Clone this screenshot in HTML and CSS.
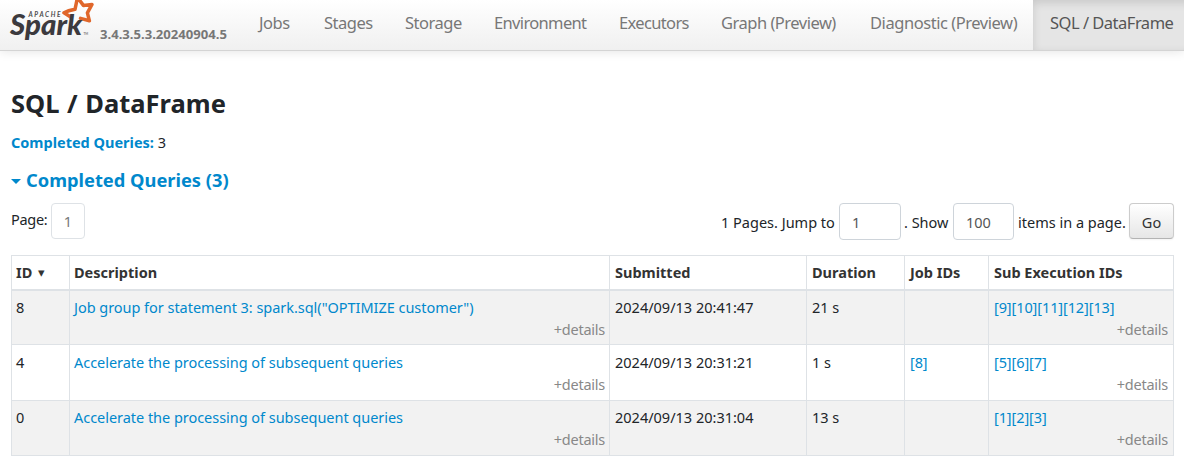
FILE: index.html
```html
<!DOCTYPE html>
<html lang="en">
<head>
<meta charset="utf-8">
<title>SQL / DataFrame</title>
<link rel="stylesheet" href="styles.css">
</head>
<body>
<nav class="navbar">
  <a class="brand">
    <svg class="logo" width="90" height="50" viewBox="0 0 90 50">
      <path class="star" d="M61 17.2 L54 12.8 Q58 10.6 65 9.3 L67.5 -2.5 L73.4 5.4 L82 4.4 L77.4 12.8 L79.4 20.8 L70.5 18.4"/>
      <text class="apache" x="18.5" y="16.6" textLength="32">APACHE</text>
      <text class="spark" x="0" y="34.8" textLength="72" lengthAdjust="spacingAndGlyphs">Spark</text>
      <text class="tm" x="73.5" y="35">TM</text>
    </svg>
    <span class="version">3.4.3.5.3.20240904.5</span>
  </a>
  <ul class="tabs">
    <li class="tab jobs">Jobs</li>
    <li class="tab stages">Stages</li>
    <li class="tab storage">Storage</li>
    <li class="tab environment">Environment</li>
    <li class="tab executors">Executors</li>
    <li class="tab graph">Graph (Preview)</li>
    <li class="tab diagnostic">Diagnostic (Preview)</li>
    <li class="tab active">SQL / DataFrame</li>
  </ul>
</nav>
<main class="content">
  <h3 class="title">SQL / DataFrame</h3>
  <p class="summary"><a class="summary-link">Completed Queries:</a> 3</p>
  <h4 class="section-title"><svg class="caret" width="10" height="5" viewBox="0 0 10 5"><path d="M0 0h10L5 5z"/></svg>Completed Queries (3)</h4>
  <div class="pager">
    <div class="pages"><span class="page-label">Page:</span><span class="page-link">1</span></div>
    <form class="jump">
      <label class="jump-label">1 Pages. Jump to</label>
      <input class="field" type="text" value="1">
      <label class="show-label">. Show</label>
      <input class="field narrow" type="text" value="100">
      <label class="items-label">items in a page.</label>
      <button class="go" type="button">Go</button>
    </form>
  </div>
  <table class="queries">
    <colgroup><col class="c-id"><col class="c-desc"><col class="c-sub"><col class="c-dur"><col class="c-job"><col class="c-exec"></colgroup>
    <thead>
      <tr><th>ID <span class="sort">▾</span></th><th>Description</th><th>Submitted</th><th>Duration</th><th>Job IDs</th><th>Sub Execution IDs</th></tr>
    </thead>
    <tbody>
      <tr>
        <td>8</td>
        <td><a class="description">Job group for statement 3: spark.sql("OPTIMIZE customer")</a><span class="details">+details</span></td>
        <td>2024/09/13 20:41:47</td><td>21 s</td><td></td>
        <td><a class="ids">[9][10][11][12][13]</a><span class="details">+details</span></td>
      </tr>
      <tr>
        <td>4</td>
        <td><a class="description">Accelerate the processing of subsequent queries</a><span class="details">+details</span></td>
        <td>2024/09/13 20:31:21</td><td>1 s</td><td><a class="ids">[8]</a></td>
        <td><a class="ids">[5][6][7]</a><span class="details">+details</span></td>
      </tr>
      <tr>
        <td>0</td>
        <td><a class="description">Accelerate the processing of subsequent queries</a><span class="details">+details</span></td>
        <td>2024/09/13 20:31:04</td><td>13 s</td><td></td>
        <td><a class="ids">[1][2][3]</a><span class="details">+details</span></td>
      </tr>
    </tbody>
  </table>
</main>
</body>
</html>
```
FILE: styles.css
```css
* { box-sizing: border-box; }
body {
  margin: 0;
  background: #fff;
  color: #212529;
  font: 14.5px/22px "Noto Sans", "Open Sans", sans-serif;
  overflow: hidden;
}
a { color: #0088cc; text-decoration: none; }

.navbar {
  display: flex;
  height: 51px;
  background: linear-gradient(#fff, #f0f0f0);
  border-bottom: 1px solid #d4d4d4;
  box-shadow: 0 1px 10px rgba(0, 0, 0, .1);
}
.brand { display: flex; width: 243px; padding-left: 10px; flex: none; }
.logo { flex: none; overflow: visible; }
.star { fill: none; stroke: #e0672b; stroke-width: 3.5; stroke-linejoin: round; stroke-linecap: round; }
.apache { font: italic 700 6.5px Lato, sans-serif; fill: #4c4c4c; }
.spark { font: italic 900 28px Lato, sans-serif; fill: #3c3a3e; }
.tm { font: 700 3px Lato, sans-serif; fill: #777; }
.version {
  margin-top: 23px;
  font-size: 13.1px;
  font-weight: 700;
  color: #777;
}
.tabs { display: flex; margin: 0; padding: 0; list-style: none; }
.tab {
  flex: none;
  height: 50px;
  padding-left: 16px;
  font-size: 16.5px;
  line-height: 45px;
  letter-spacing: -.5px;
  white-space: nowrap;
  color: #777;
}
.jobs { width: 65px; }
.stages { width: 81px; }
.storage { width: 89px; }
.environment { width: 125px; letter-spacing: -.65px; }
.executors { width: 102px; letter-spacing: -.65px; }
.graph { width: 149px; }
.diagnostic { width: 179px; letter-spacing: -.45px; }
.active {
  width: 160px;
  padding-left: 17px;
  color: #555;
  background: #e5e5e5;
  box-shadow: inset 0 3px 8px rgba(0, 0, 0, .125);
}

.content { width: 1174px; padding-left: 11px; }
.title { margin: 36px 0 0; font-size: 25.5px; line-height: 32px; word-spacing: 1px; }
.summary { margin: 12px 0 0; }
.summary-link { font-weight: 700; }
.section-title {
  display: flex;
  align-items: center;
  margin: 15px 0 0;
  font-size: 18.3px;
  line-height: 24px;
  color: #0088cc;
}
.caret { margin: 3px 5px 0 0; fill: #0088cc; }

.pager { display: flex; justify-content: space-between; height: 52px; margin-top: 11px; }
.pages { display: flex; height: 36px; }
.page-label { width: 40px; padding-top: 5px; letter-spacing: -.3px; }
.page-link {
  width: 34px;
  padding-top: 6px;
  border: 1px solid #dee2e6;
  border-radius: 4px;
  text-align: center;
  color: #777;
}
.jump { display: flex; margin: 0; white-space: nowrap; }
.jump label { padding-top: 8px; }
.jump-label { width: 118px; }
.show-label { width: 52px; padding-left: 3px; }
.items-label { width: 115px; padding-left: 4px; }
.field {
  width: 62px;
  height: 37px;
  padding: 1px 12px 0;
  border: 1px solid #ced4da;
  border-radius: 4px;
  font: inherit;
  color: #555;
}
.narrow { width: 61px; }
.go {
  width: 45px;
  height: 36px;
  padding: 1px 0 0;
  border: 1px solid #ccc;
  border-bottom-color: #b3b3b3;
  border-radius: 4px;
  background: linear-gradient(#fff, #e6e6e6);
  box-shadow: 0 1px 2px rgba(0, 0, 0, .05);
  font: inherit;
  color: #333;
}

.queries { width: 1163px; table-layout: fixed; border-collapse: collapse; }
.c-id { width: 58px; }
.c-desc { width: 540px; }
.c-sub { width: 197px; }
.c-dur { width: 98px; }
.c-job { width: 84px; }
.c-exec { width: 185px; }
.queries th, .queries td { padding: 5px 5px 0; border: 1px solid #dee2e6; text-align: left; vertical-align: top; white-space: nowrap; }
.queries th:nth-child(-n+2), .queries td:nth-child(-n+2) { padding-left: 4px; padding-right: 4px; }
.queries th { height: 34px; border-bottom-width: 2px; color: #333; }
.queries td { height: 55.3px; }
.queries tbody tr:nth-child(odd) { background: #f2f2f2; }
.queries tbody tr:nth-child(2) td { padding-top: 6px; }
.sort { padding-left: 2px; font-family: "DejaVu Sans", sans-serif; font-size: 13px; line-height: 1; vertical-align: 1px; }
.description { letter-spacing: -.035px; }
.ids { letter-spacing: -.1px; }
.details { display: block; text-align: right; letter-spacing: -.25px; color: #888; }
```
